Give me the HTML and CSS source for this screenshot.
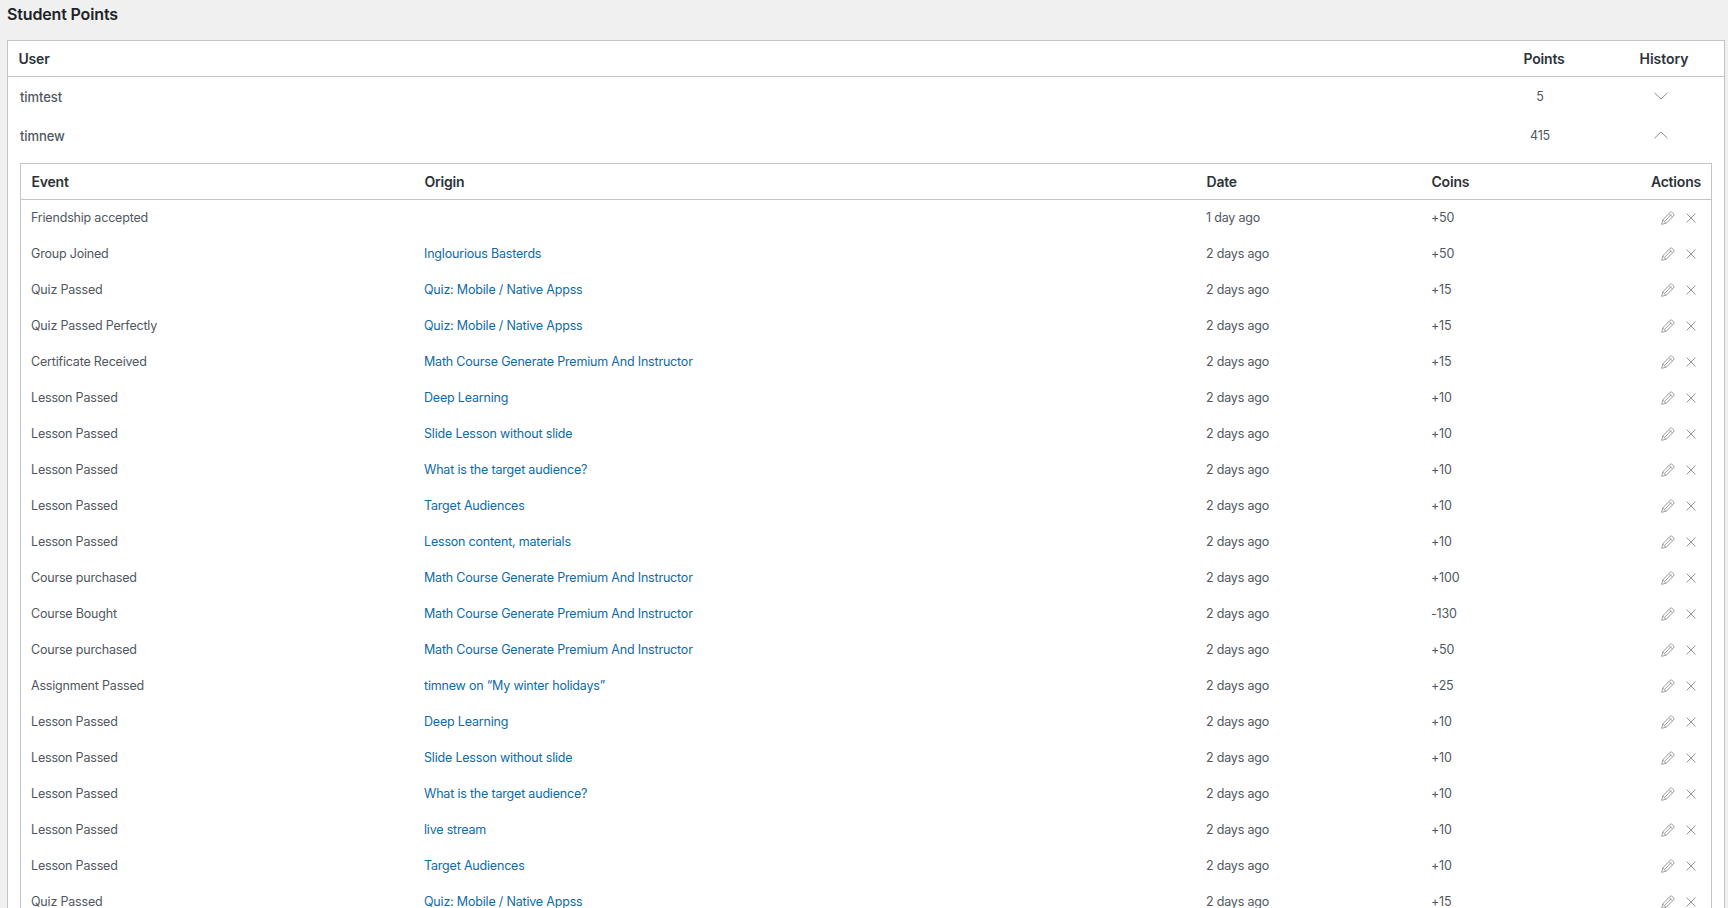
FILE: index.html
```html
<!DOCTYPE html>
<html lang="en">
<head>
<meta charset="utf-8">
<title>Student Points</title>
<link rel="stylesheet" href="styles.css">
</head>
<body>
<svg class="sprite" width="0" height="0" aria-hidden="true">
  <symbol id="pencil" viewBox="0 0 14 14"><path d="M.7 13.300L1.700 9L8.900 1.500a1.800 1.800 0 0 1 2.500 0l1.100 1.100a1.800 1.800 0 0 1 0 2.500L5 12.300zM1.700 9L5 12.300M3.400 10.600l6.800-7M8 2.500l3.500 3.500" fill="none" stroke="currentColor" stroke-width=".7"/></symbol>
  <symbol id="close" viewBox="0 0 10 10"><path d="M.5.5l9 9M9.5.5l-9 9" fill="none" stroke="currentColor" stroke-width=".9"/></symbol>
  <symbol id="down" viewBox="0 0 14 8"><path d="M.5.8L7 7l6.500-6.200" fill="none" stroke="currentColor" stroke-width="1"/></symbol>
  <symbol id="up" viewBox="0 0 14 8"><path d="M.5 7.200L7 1l6.500 6.200" fill="none" stroke="currentColor" stroke-width="1"/></symbol>
</svg>
<main class="page">
  <h1 class="title">Student Points</h1>
  <table class="box users">
    <colgroup><col><col class="c-points"><col class="c-history"></colgroup>
    <thead><tr><th>User</th><th class="center points-head">Points</th><th class="center history-head">History</th></tr></thead>
    <tbody>
      <tr class="user"><td class="name">timtest</td><td class="pts">5</td><td class="chev"><svg class="i-chev"><use href="#down"/></svg></td></tr>
      <tr class="user"><td class="name">timnew</td><td class="pts">415</td><td class="chev"><svg class="i-chev"><use href="#up"/></svg></td></tr>
      <tr><td colspan="3" class="nested">
        <table class="box events">
          <colgroup><col class="c-event"><col class="c-origin"><col class="c-date"><col class="c-coins"><col></colgroup>
          <thead><tr><th>Event</th><th>Origin</th><th>Date</th><th>Coins</th><th class="right">Actions</th></tr></thead>
          <tbody id="rows">
            <tr><td>Friendship accepted</td><td></td><td>1 day ago</td><td>+50</td><td class="acts"><svg class="i-pen"><use href="#pencil"/></svg><svg class="i-x"><use href="#close"/></svg></td></tr>
            <tr><td>Group Joined</td><td><a href="#">Inglourious Basterds</a></td><td>2 days ago</td><td>+50</td><td class="acts"><svg class="i-pen"><use href="#pencil"/></svg><svg class="i-x"><use href="#close"/></svg></td></tr>
            <tr><td>Quiz Passed</td><td><a href="#">Quiz: Mobile / Native Appss</a></td><td>2 days ago</td><td>+15</td><td class="acts"><svg class="i-pen"><use href="#pencil"/></svg><svg class="i-x"><use href="#close"/></svg></td></tr>
            <tr><td>Quiz Passed Perfectly</td><td><a href="#">Quiz: Mobile / Native Appss</a></td><td>2 days ago</td><td>+15</td><td class="acts"><svg class="i-pen"><use href="#pencil"/></svg><svg class="i-x"><use href="#close"/></svg></td></tr>
            <tr><td>Certificate Received</td><td><a href="#">Math Course Generate Premium And Instructor</a></td><td>2 days ago</td><td>+15</td><td class="acts"><svg class="i-pen"><use href="#pencil"/></svg><svg class="i-x"><use href="#close"/></svg></td></tr>
            <tr><td>Lesson Passed</td><td><a href="#">Deep Learning</a></td><td>2 days ago</td><td>+10</td><td class="acts"><svg class="i-pen"><use href="#pencil"/></svg><svg class="i-x"><use href="#close"/></svg></td></tr>
            <tr><td>Lesson Passed</td><td><a href="#">Slide Lesson without slide</a></td><td>2 days ago</td><td>+10</td><td class="acts"><svg class="i-pen"><use href="#pencil"/></svg><svg class="i-x"><use href="#close"/></svg></td></tr>
            <tr><td>Lesson Passed</td><td><a href="#">What is the target audience?</a></td><td>2 days ago</td><td>+10</td><td class="acts"><svg class="i-pen"><use href="#pencil"/></svg><svg class="i-x"><use href="#close"/></svg></td></tr>
            <tr><td>Lesson Passed</td><td><a href="#">Target Audiences</a></td><td>2 days ago</td><td>+10</td><td class="acts"><svg class="i-pen"><use href="#pencil"/></svg><svg class="i-x"><use href="#close"/></svg></td></tr>
            <tr><td>Lesson Passed</td><td><a href="#">Lesson content, materials</a></td><td>2 days ago</td><td>+10</td><td class="acts"><svg class="i-pen"><use href="#pencil"/></svg><svg class="i-x"><use href="#close"/></svg></td></tr>
            <tr><td>Course purchased</td><td><a href="#">Math Course Generate Premium And Instructor</a></td><td>2 days ago</td><td>+100</td><td class="acts"><svg class="i-pen"><use href="#pencil"/></svg><svg class="i-x"><use href="#close"/></svg></td></tr>
            <tr><td>Course Bought</td><td><a href="#">Math Course Generate Premium And Instructor</a></td><td>2 days ago</td><td>-130</td><td class="acts"><svg class="i-pen"><use href="#pencil"/></svg><svg class="i-x"><use href="#close"/></svg></td></tr>
            <tr><td>Course purchased</td><td><a href="#">Math Course Generate Premium And Instructor</a></td><td>2 days ago</td><td>+50</td><td class="acts"><svg class="i-pen"><use href="#pencil"/></svg><svg class="i-x"><use href="#close"/></svg></td></tr>
            <tr><td>Assignment Passed</td><td><a href="#">timnew on “My winter holidays”</a></td><td>2 days ago</td><td>+25</td><td class="acts"><svg class="i-pen"><use href="#pencil"/></svg><svg class="i-x"><use href="#close"/></svg></td></tr>
            <tr><td>Lesson Passed</td><td><a href="#">Deep Learning</a></td><td>2 days ago</td><td>+10</td><td class="acts"><svg class="i-pen"><use href="#pencil"/></svg><svg class="i-x"><use href="#close"/></svg></td></tr>
            <tr><td>Lesson Passed</td><td><a href="#">Slide Lesson without slide</a></td><td>2 days ago</td><td>+10</td><td class="acts"><svg class="i-pen"><use href="#pencil"/></svg><svg class="i-x"><use href="#close"/></svg></td></tr>
            <tr><td>Lesson Passed</td><td><a href="#">What is the target audience?</a></td><td>2 days ago</td><td>+10</td><td class="acts"><svg class="i-pen"><use href="#pencil"/></svg><svg class="i-x"><use href="#close"/></svg></td></tr>
            <tr><td>Lesson Passed</td><td><a href="#">live stream</a></td><td>2 days ago</td><td>+10</td><td class="acts"><svg class="i-pen"><use href="#pencil"/></svg><svg class="i-x"><use href="#close"/></svg></td></tr>
            <tr><td>Lesson Passed</td><td><a href="#">Target Audiences</a></td><td>2 days ago</td><td>+10</td><td class="acts"><svg class="i-pen"><use href="#pencil"/></svg><svg class="i-x"><use href="#close"/></svg></td></tr>
            <tr><td>Quiz Passed</td><td><a href="#">Quiz: Mobile / Native Appss</a></td><td>2 days ago</td><td>+15</td><td class="acts"><svg class="i-pen"><use href="#pencil"/></svg><svg class="i-x"><use href="#close"/></svg></td></tr>
          </tbody>
        </table>
      </td></tr>
    </tbody>
  </table>
</main>
</body>
</html>
```
FILE: styles.css
```css
* { box-sizing: border-box; }
html, body { margin: 0; height: 100%; overflow: hidden; }
body {
  background: #f0f0f1;
  color: #50575e;
  font-family: Inter, "Liberation Sans", sans-serif;
  font-size: 12.5px;
  letter-spacing: -.19px;
  line-height: 18px;
}
.sprite { display: block; }
.page { padding: 0 3px 0 7px; }
.title {
  margin: 0;
  padding-top: 4px;
  height: 40px;
  font-size: 16px;
  line-height: 21px;
  font-weight: 600;
  letter-spacing: -.15px;
  color: #1d2327;
}
table { border-collapse: separate; border-spacing: 0; table-layout: fixed; width: 100%; }
.box { background: #fff; border: 1px solid #c3c4c7; }
th {
  height: 36px;
  padding: 0 10px 0 9.5px;
  border-bottom: 1px solid #c3c4c7;
  text-align: left;
  font-size: 14px;
  letter-spacing: -.2px;
  font-weight: 600;
  color: #2c3338;
}
.users th { padding-left: 10.5px; }
.users th.center { text-align: center; padding: 0; }
.users th.points-head { padding-left: 4px; }
.users th.history-head { padding-left: 2px; letter-spacing: -.05px; }
.c-points { width: 120px; }
.c-history { width: 122px; }
.user td { height: 39px; padding: 0; vertical-align: middle; }
.user .name { padding-left: 12px; font-size: 13px; font-weight: 500; letter-spacing: -.08px; }
.user .pts { text-align: center; padding-right: 4px; }
.user .chev { text-align: center; line-height: 0; }
.i-chev { width: 14px; height: 8px; color: #8c8f94; display: inline-block; position: relative; top: -1px; left: -2px; }
.nested { padding: 8px 12px 0; }
.events th.right { text-align: right; }
.c-event { width: 393px; }
.c-origin { width: 782px; }
.c-date { width: 225px; }
.c-coins { width: 210px; }
.events td { height: 36px; padding: 0 10px; vertical-align: middle; }
a { color: #0f6aa6; text-decoration: none; }
.events .acts { text-align: right; line-height: 0; padding-right: 15px; }
.i-pen { width: 14px; height: 14px; margin-bottom: 1px; color: #777; display: inline-block; vertical-align: middle; }
.i-x { width: 10px; height: 10px; margin-bottom: 1px; color: #8a8a8a; display: inline-block; vertical-align: middle; margin-left: 11px; }
```
